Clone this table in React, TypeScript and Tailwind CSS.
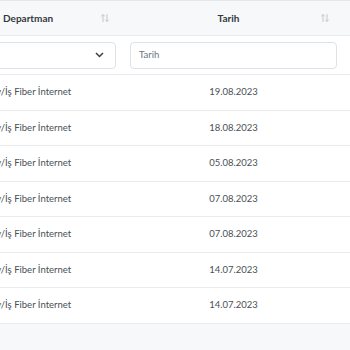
const rows = [
  { dept: 'Ev/İş Fiber İnternet', date: '19.08.2023' },
  { dept: 'Ev/İş Fiber İnternet', date: '18.08.2023' },
  { dept: 'Ev/İş Fiber İnternet', date: '05.08.2023' },
  { dept: 'Ev/İş Fiber İnternet', date: '07.08.2023' },
  { dept: 'Ev/İş Fiber İnternet', date: '07.08.2023' },
  { dept: 'Ev/İş Fiber İnternet', date: '14.07.2023' },
  { dept: 'Ev/İş Fiber İnternet', date: '14.07.2023' },
];

const SortIcon = () => (
  <svg width="10" height="10" viewBox="0 0 10 10" fill="none" stroke="#c3c7cc" strokeWidth="1">
    <path d="M3 9V1.5M1.2 3.3L3 1.5l1.8 1.8" />
    <path d="M7 1v7.5M5.2 6.7L7 8.5l1.8-1.8" />
  </svg>
);

const Chevron = () => (
  <svg width="9" height="6" viewBox="0 0 9 6" fill="none" stroke="#3a3f45" strokeWidth="1.5">
    <path d="M1 1l3.5 3.5L8 1" />
  </svg>
);

export default function App() {
  return (
    <div className="w-[350px] h-[350px] overflow-hidden bg-[#f7f8fa] font-['Lato',sans-serif]">
      {/* table is scrolled sideways, first column partly hidden */}
      <div className="flex flex-col -ml-[21px] w-[420px] border-t border-[#e3e6ea]">
        <div className="flex h-[35px] bg-[#f7f8fa] border-b border-[#e9ecef] text-[10px] font-bold text-[#343a40]">
          <div className="w-[144px] flex items-center pl-[24px] pr-[13px]">
            <span className="flex-1">Departman</span>
            <SortIcon />
          </div>
          <div className="w-[221px] flex items-center pr-[14px]">
            <span className="flex-1 text-center pl-[14px]">Tarih</span>
            <SortIcon />
          </div>
          <div className="flex-1" />
        </div>
        <div className="flex h-[39px] bg-white border-b border-[#e9ecef] items-center">
          <div className="w-[144px] pr-[7px]">
            <div className="h-[27px] border border-[#dee2e6] rounded-[4px] flex items-center justify-end pr-[11px]">
              <Chevron />
            </div>
          </div>
          <div className="w-[221px] px-[7px]">
            <div className="h-[27px] border border-[#dee2e6] rounded-[4px] flex items-center px-[8px] text-[9.5px] text-[#6c757d]">
              Tarih
            </div>
          </div>
          <div className="flex-1" />
        </div>
        {rows.map((r, i) => (
          <div key={i} className="flex h-[35.5px] bg-white border-b border-[#e9ecef] items-center text-[9.5px] text-[#4a5056]">
            <div className="w-[144px] pl-[12px] whitespace-nowrap">{r.dept}</div>
            <div className="w-[221px] text-center">{r.date}</div>
            <div className="flex-1" />
          </div>
        ))}
      </div>
    </div>
  );
}
